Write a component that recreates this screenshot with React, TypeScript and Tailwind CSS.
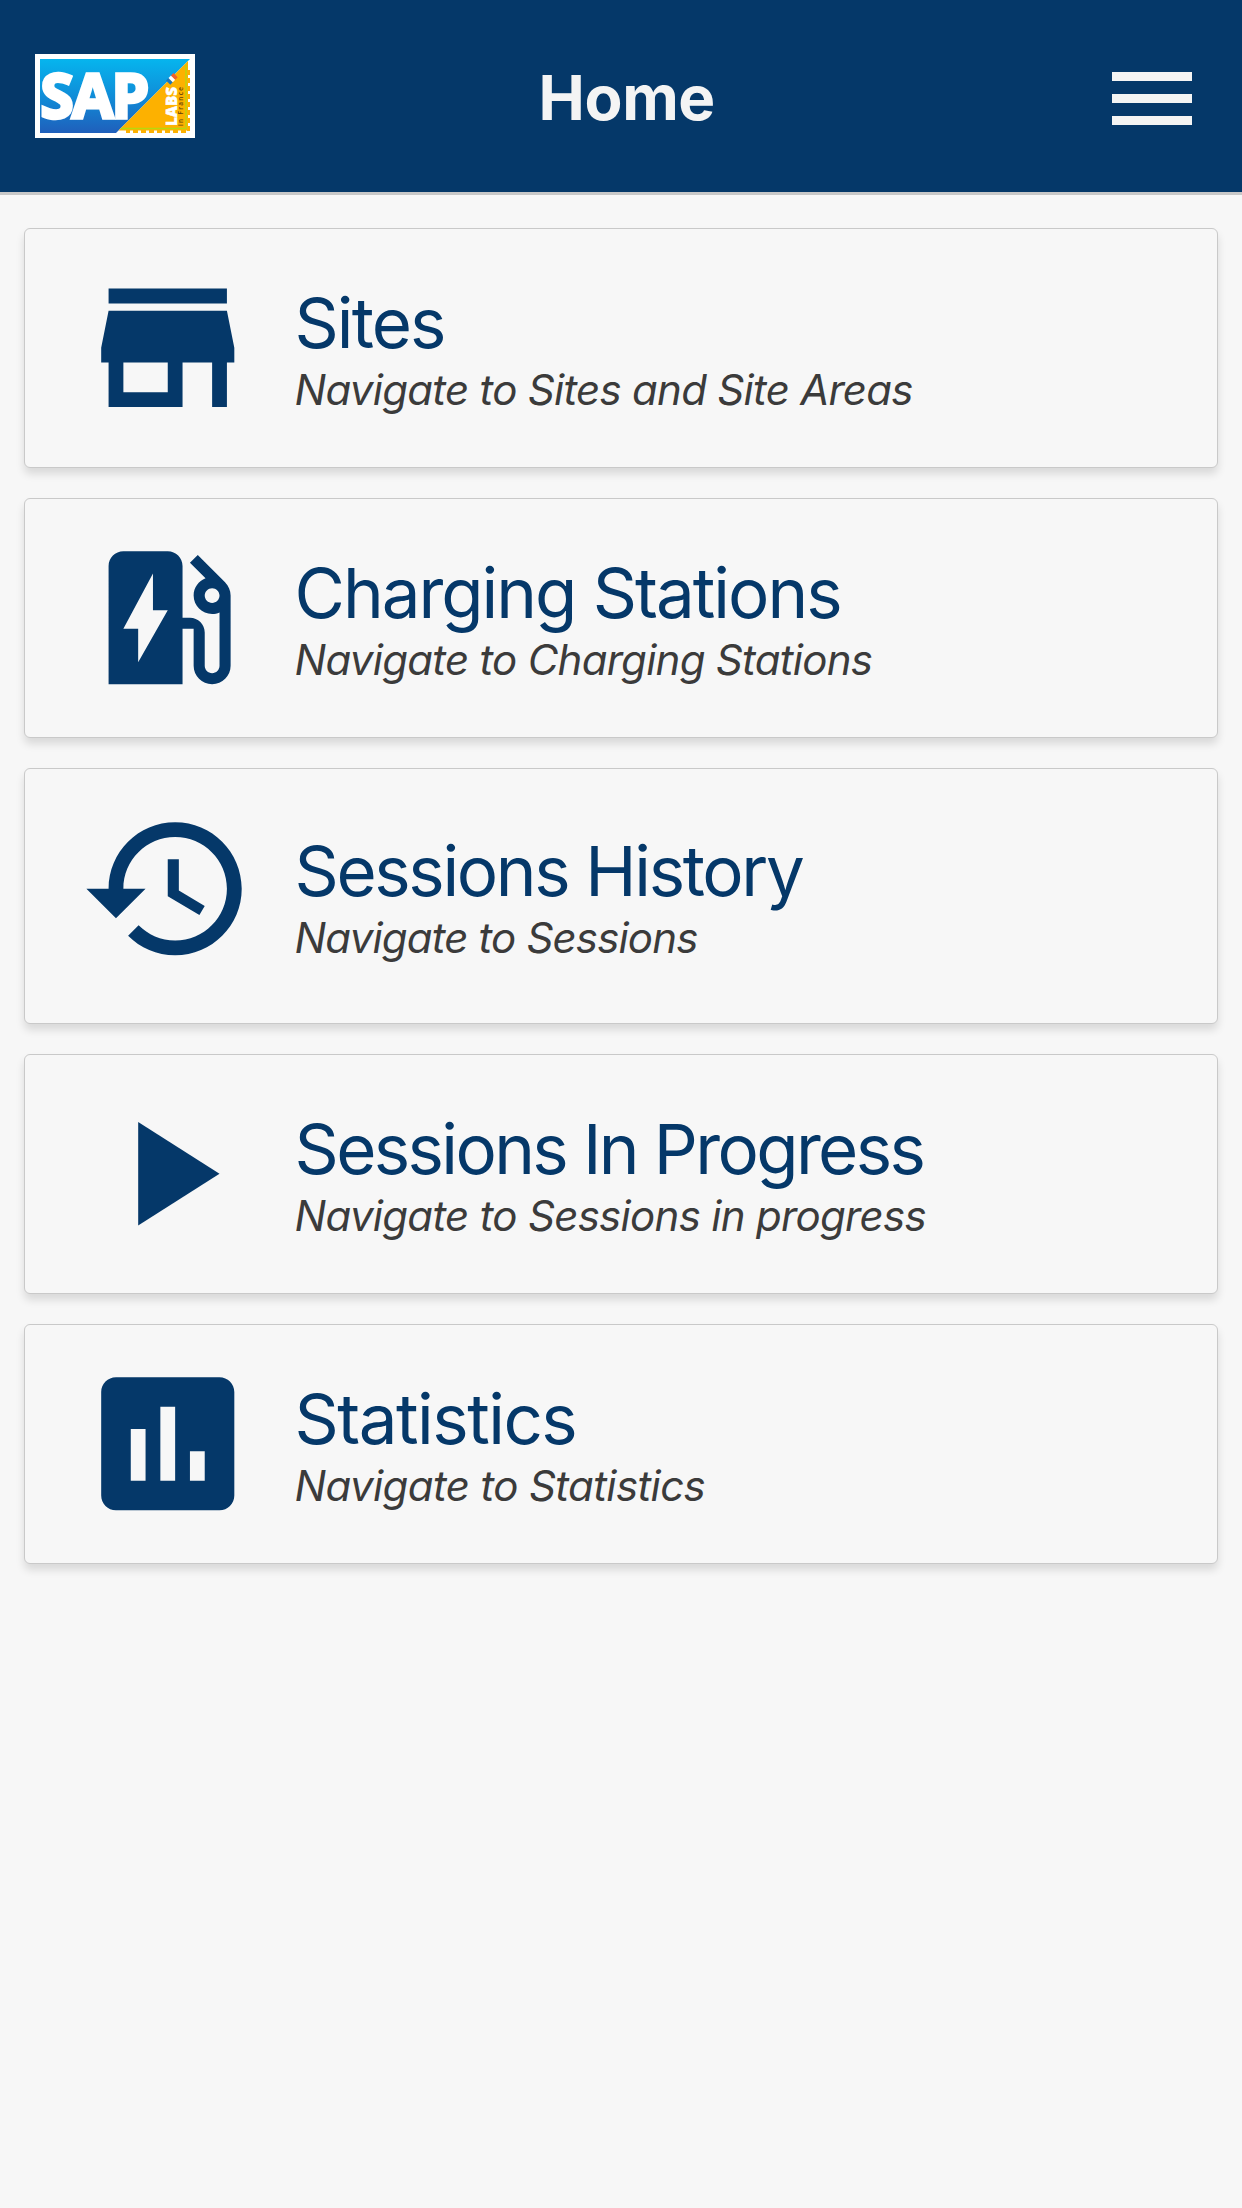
const NAVY = "#053869";

const items = [
  {
    title: "Sites",
    subtitle: "Navigate to Sites and Site Areas",
    height: "h-[240px] pt-[30px]",
    titleTracking: "tracking-[-1.9px]",
    subtitleTracking: "tracking-[-0.72px]",
    icon: "M20 4H4v2h16V4zm1 10v-2l-1-5H4l-1 5v2h1v6h10v-6h4v6h2v-6h1zm-9 4H6v-4h6v4z",
  },
  {
    title: "Charging Stations",
    subtitle: "Navigate to Charging Stations",
    height: "h-[240px] pt-[30px]",
    titleTracking: "tracking-[-2px]",
    subtitleTracking: "tracking-[-0.73px]",
    icon: "M19.77 7.23l.01-.01-3.72-3.72L15 4.56l2.11 2.11c-.94.36-1.61 1.26-1.61 2.33 0 1.38 1.12 2.5 2.5 2.5.36 0 .69-.08 1-.21v7.21c0 .55-.45 1-1 1s-1-.45-1-1V14c0-1.1-.9-2-2-2h-1V5c0-1.1-.9-2-2-2H6c-1.1 0-2 .9-2 2v16h10v-7.5h1.5v5c0 1.38 1.12 2.5 2.5 2.5s2.5-1.12 2.5-2.5V9c0-.69-.28-1.32-.73-1.77zM18 10c-.55 0-1-.45-1-1s.45-1 1-1 1 .45 1 1-.45 1-1 1zM8 18v-4.5H6L10 6v5h2l-4 7z",
  },
  {
    title: "Sessions History",
    subtitle: "Navigate to Sessions",
    height: "h-[256px] pt-[31px]",
    textOffset: "mt-[7px]",
    titleTracking: "tracking-[-2.35px]",
    subtitleTracking: "tracking-[-0.83px]",
    icon: "M13 3c-4.970 0-9 4.030-9 9H1l4 4 4-4H6c0-3.870 3.130-7 7-7s7 3.130 7 7-3.130 7-7 7c-1.930 0-3.680-.79-4.940-2.060l-1.420 1.420C8.270 19.990 10.510 21 13 21c4.970 0 9-4.030 9-9s-4.030-9-9-9zm-1 5v5l4.280 2.540.72-1.210-3.500-2.080V8H12z",
  },
  {
    title: "Sessions In Progress",
    subtitle: "Navigate to Sessions in progress",
    height: "h-[240px] pt-[30px]",
    titleTracking: "tracking-[-2.62px]",
    subtitleTracking: "tracking-[-0.7px]",
    icon: "M8 5v14l11-7z",
  },
  {
    title: "Statistics",
    subtitle: "Navigate to Statistics",
    height: "h-[240px] pt-[30px]",
    titleTracking: "tracking-[-1.5px]",
    subtitleTracking: "tracking-[-0.62px]",
    icon: "M19 3H5c-1.1 0-2 .9-2 2v14c0 1.1.9 2 2 2h14c1.1 0 2-.9 2-2V5c0-1.1-.9-2-2-2zM9 17H7v-7h2v7zm4 0h-2V7h2v10zm4 0h-2v-4h2v4z",
  },
];

function Logo() {
  return (
    <svg viewBox="0 0 160 84" className="h-[84px] w-[160px]">
      <defs>
        <linearGradient id="sap" x1="0" y1="0" x2="0" y2="1">
          <stop offset="0" stopColor="#06b5ee" />
          <stop offset="0.5" stopColor="#108dd8" />
          <stop offset="1" stopColor="#1f5fbb" />
        </linearGradient>
      </defs>
      <rect width="160" height="84" fill="#fff" />
      <path d="M5 5H155L81 79H5z" fill="url(#sap)" />
      <path d="M153 7V76.500H83.500z" fill="#fdb100" />
      <path d="M153.500 16V77.500H91" fill="none" stroke="#fdb100" strokeWidth="3" strokeDasharray="5 3" />
      <path d="M151 11V74.500H86" fill="none" stroke="#b9d80c" strokeWidth="1.400" />
      <text
        y="63.500"
        x="5.500 37 76.500"
        fill="#fff"
        stroke="#fff"
        strokeWidth="3.400"
        fontFamily="Open Sans, sans-serif"
        fontWeight="700"
        fontSize="60"
      >
        SAP
      </text>
      <g transform="rotate(-45 136 25)">
        <rect x="131.500" y="22.500" width="3.500" height="6" fill="#1b75bb" />
        <rect x="135" y="22.500" width="3.500" height="6" fill="#fff" />
        <rect x="138.500" y="22.500" width="3.500" height="6" fill="#f0602c" />
      </g>
      <text
        transform="translate(142 72) rotate(-90)"
        textLength="39"
        lengthAdjust="spacingAndGlyphs"
        fill="#fff"
        stroke="#fff"
        strokeWidth="0.500"
        fontFamily="Open Sans, sans-serif"
        fontWeight="800"
        fontSize="15"
      >
        LABS
      </text>
      <text
        transform="translate(148 72) rotate(-90)"
        textLength="39"
        fill="#5f430f"
        fontFamily="Open Sans, sans-serif"
        fontWeight="600"
        fontSize="6.500"
      >
        in France
      </text>
    </svg>
  );
}

export default function App() {
  return (
    <div className="min-h-[2208px] w-[1242px] bg-[#f7f7f7] font-['Inter',sans-serif]">
      <header className="flex h-[195px] justify-between border-b-[3px] border-[#c8c8c8] bg-[#053869] pr-[49.500px] pl-[35px]">
        <div className="w-[160px] pt-[54px]">
          <Logo />
        </div>
        <h1 className="pt-[58px] pl-[26px] text-[62px] leading-[80px] font-bold tracking-[-0.4px] text-[#f4f4f4]">
          Home
        </h1>
        <div className="flex w-[160px] flex-col items-end gap-[13px] pt-[72px]">
          <div className="h-[9px] w-[80px] bg-[#f4f4f4]" />
          <div className="h-[9px] w-[80px] bg-[#f4f4f4]" />
          <div className="h-[9px] w-[80px] bg-[#f4f4f4]" />
        </div>
      </header>
      <main className="flex flex-col gap-[30px] px-[24px] pt-[33px]">
        {items.map((it) => (
          <section
            key={it.title}
            className={`flex items-start rounded-[6px] border border-[#c9c9c9] bg-[#f7f7f7] pl-[53.500px] shadow-[0_6px_9px_rgba(0,0,0,0.12)] ${it.height}`}
          >
            <svg viewBox="0 0 24 24" className="mt-[0.400px] size-[177.500px] shrink-0" fill={NAVY}>
              <path d={it.icon} />
            </svg>
            <div className={`pt-[22px] pl-[38.500px] whitespace-nowrap ${it.textOffset ?? ""}`}>
              <h2 className={`text-[69px] leading-[84px] text-[#053869] ${it.titleTracking}`}>{it.title}</h2>
              <p className={`text-[42px] leading-[50px] text-[#3b3b3b] italic ${it.subtitleTracking}`}>{it.subtitle}</p>
            </div>
          </section>
        ))}
      </main>
    </div>
  );
}
